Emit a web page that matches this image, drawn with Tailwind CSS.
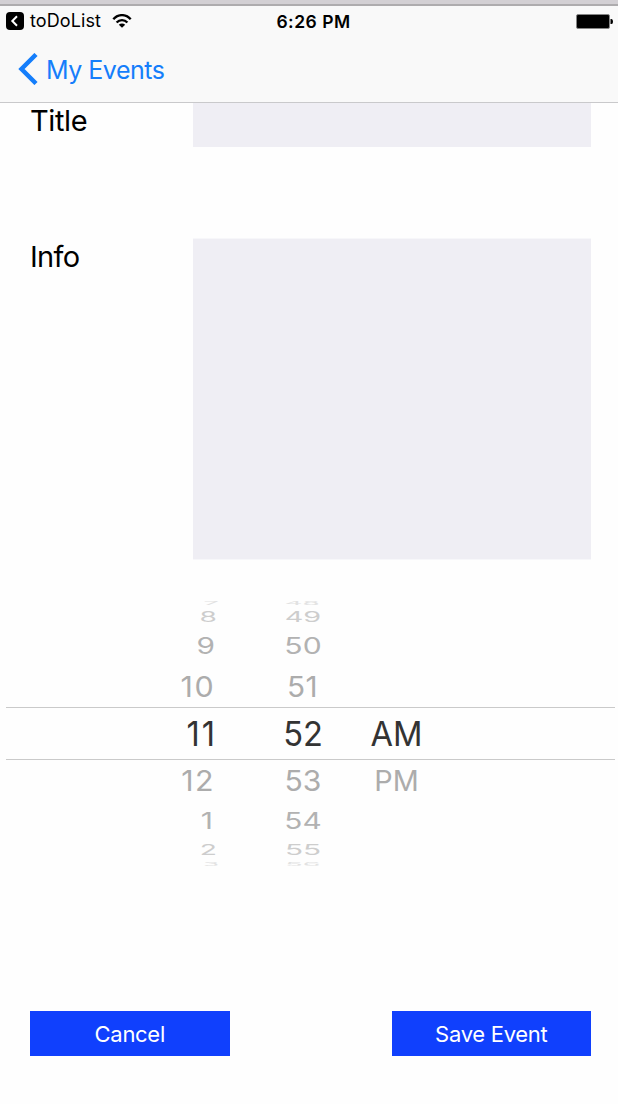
<!DOCTYPE html>
<html lang="en">
<head>
<meta charset="utf-8">
<title>Edit Event</title>
<script src="https://cdn.jsdelivr.net/npm/@tailwindcss/browser@4"></script>
</head>
<body class="bg-white">
<div class="flex h-[1104px] w-[618px] flex-col overflow-hidden bg-[#fefefe] font-['Inter',sans-serif] font-normal text-black">
  <header class="h-[103px] shrink-0 border-b border-[#c9c9cb] bg-[#f9f9f9]">
    <div class="h-[6px] border-b-2 border-[#aeacae] bg-[#d3d0d4]"></div>
    <div class="grid h-[30px] grid-cols-[1fr_auto_1fr] items-center pr-[5px] pl-[6px]">
      <div class="flex items-center">
        <svg class="h-[18px] w-[18px]" viewBox="0 0 18 18"><rect width="18" height="18" rx="4"/><path d="M11 4.200 6.300 9l4.700 4.800" fill="none" stroke="#fff" stroke-width="2"/></svg>
        <span class="ml-[6px] w-[82px] text-[18px] leading-[22px] tracking-[.1px] whitespace-nowrap">toDoList</span>
        <svg class="h-[14px] w-[20px]" viewBox="0 0 20 14"><g fill="none" stroke="#000" stroke-width="2.300"><path d="M1.300 5.300C6-.3 14-.3 18.700 5.300"/><path d="M4.600 8.500c3-3.300 7.800-3.300 10.800 0"/></g><path d="M10 13.800 6.800 10.700c1.800-1.700 4.600-1.700 6.400 0z"/></svg>
      </div>
      <span class="relative top-[1px] left-[4px] text-[17.500px] leading-[22px] font-semibold tracking-[.5px]">6:26 PM</span>
      <svg class="h-[15px] w-[37px] justify-self-end" viewBox="0 0 37 15"><rect x=".5" y=".5" width="33" height="14" rx="1.500" fill="#000" stroke="#858585"/><path d="M34.500 5h1a1.500 2.500 0 0 1 0 5h-1z"/></svg>
    </div>
    <div class="flex h-[66px] items-center pl-[18px] text-[#157efb]">
      <svg class="h-[32px] w-[20px]" viewBox="0 0 20 32"><path d="M18 1.500 3.500 16 18 30.500" fill="none" stroke="currentColor" stroke-width="4.500"/></svg>
      <span class="ml-[8px] pt-px text-[25px] leading-[30px] tracking-[-.5px]">My Events</span>
    </div>
  </header>

  <main class="flex flex-1 flex-col">
    <div class="flex h-[44px] justify-between pr-[27px] pl-[30px]">
      <label class="text-[29px] leading-[35px] tracking-[-.4px]">Title</label>
      <div class="w-[398px] bg-[#efeef4]"></div>
    </div>
    <div class="mt-[91px] flex h-[322px] justify-between pr-[27px] pl-[30px]">
      <label class="pt-[1px] text-[29px] leading-[35px] tracking-[-.7px]">Info</label>
      <div class="w-[398px] border-y border-[#f7f7fa] bg-[#efeef4]"></div>
    </div>

    <!-- Time wheel: rows shrink vertically away from the selection -->
    <div class="mt-[39px] mr-[3px] ml-[6px] text-[32px] text-[#a8a8a8]">
      <div class="grid h-[8px] grid-cols-[213px_41px_84px_103px] leading-[7px] text-[#e2e2e2]">
        <span class="origin-right scale-x-[.85] scale-y-[.15] text-right">7</span><i></i><span class="scale-x-[.87] scale-y-[.15] text-center">48</span>
      </div>
      <div class="grid h-[20px] grid-cols-[211px_43px_86px_101px] leading-[20px] text-[#cdcdcd]">
        <span class="origin-right scale-x-[.88] scale-y-[.44] text-right">8</span><i></i><span class="scale-x-[.9] scale-y-[.44] text-center">49</span>
      </div>
      <div class="grid h-[38px] grid-cols-[209px_45px_86px_101px] leading-[38px] text-[#b2b2b2]">
        <span class="origin-right scale-x-[.93] scale-y-[.71] text-right">9</span><i></i><span class="scale-x-[.94] scale-y-[.71] text-center">50</span>
      </div>
      <div class="grid h-[42px] grid-cols-[209px_45px_85px_102px] leading-[43px] text-[#acacac]">
        <span class="origin-right scale-x-[.95] scale-y-[.9] text-right tracking-[1.500px]">10</span><i></i><span class="scale-x-[.93] scale-y-[.9] text-center tracking-[.5px]">51</span>
      </div>
      <div class="grid h-[53px] grid-cols-[211px_43px_86px_101px] border-y border-[#cacaca] text-[34px] leading-[51px] text-[#333]">
        <span class="origin-right scale-x-[.96] text-right tracking-[2px]">11</span><i></i><span class="scale-x-[.96] text-center">52</span><span class="scale-x-[.96] text-center">AM</span>
      </div>
      <div class="grid h-[42px] grid-cols-[209px_45px_86px_101px] leading-[42px] text-[#acacac]">
        <span class="origin-right scale-x-[.95] scale-y-[.9] text-right tracking-[1.500px]">12</span><i></i><span class="scale-x-[.94] scale-y-[.9] text-center">53</span><span class="scale-x-[.9] scale-y-[.9] text-center">PM</span>
      </div>
      <div class="grid h-[38px] grid-cols-[207px_47px_86px_101px] leading-[38px] text-[#b2b2b2]">
        <span class="origin-right scale-x-[.94] scale-y-[.71] text-right">1</span><i></i><span class="scale-x-[.93] scale-y-[.71] text-center">54</span>
      </div>
      <div class="grid h-[20px] grid-cols-[211px_43px_86px_101px] leading-[20px] text-[#cdcdcd]">
        <span class="origin-right scale-x-[.88] scale-y-[.44] text-right">2</span><i></i><span class="scale-x-[.93] scale-y-[.44] text-center">55</span>
      </div>
      <div class="grid h-[8px] grid-cols-[213px_41px_86px_101px] leading-[8px] text-[#e2e2e2]">
        <span class="origin-right scale-x-[.8] scale-y-[.15] text-right">3</span><i></i><span class="scale-x-[.9] scale-y-[.15] text-center">56</span>
      </div>
    </div>

    <div class="mt-auto mb-[48px] flex justify-between pr-[27px] pl-[30px] text-[22px] leading-[46px] tracking-[-.3px] text-white">
      <button class="h-[45px] w-[199.500px] bg-[#1040fd]">Cancel</button>
      <button class="h-[45px] w-[199.500px] bg-[#1040fd]">Save Event</button>
    </div>
  </main>
</div>
</body>
</html>
